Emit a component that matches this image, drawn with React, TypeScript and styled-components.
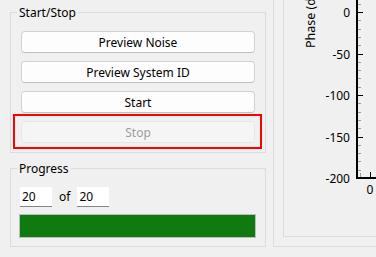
import React from "react";
import styled, { createGlobalStyle } from "styled-components";

const GlobalStyle = createGlobalStyle`
  html, body {
    margin: 0;
    padding: 0;
    background: #f0f0f0;
  }
  body {
    font-family: "Noto Sans", "Liberation Sans", sans-serif;
    font-size: 12px;
    color: #000;
  }
`;

const MAJOR = [
  { y: 12, label: "0" },
  { y: 53.5, label: "-50" },
  { y: 95, label: "-100" },
  { y: 136.5, label: "-150" },
  { y: 178, label: "-200" },
];

const MINOR: number[] = [];
for (let i = -3; i < 20; i++) {
  if (i % 5 === 0) continue;
  const y = 12 + i * 8.3;
  if (y > -19 && y < 178) MINOR.push(Math.round(y));
}

const App: React.FC = () => {
  return (
    <Window>
      <GlobalStyle />
      <Sidebar>
        <GroupBox>
          <GroupTitle>Start/Stop</GroupTitle>
          <StartStopBody>
            <ButtonStack>
              <PushButton>Preview Noise</PushButton>
              <PushButton>Preview System ID</PushButton>
              <PushButton>Start</PushButton>
            </ButtonStack>
            <Highlight>
              <PushButton disabled>Stop</PushButton>
            </Highlight>
          </StartStopBody>
        </GroupBox>
        <GroupBox>
          <GroupTitle>Progress</GroupTitle>
          <ProgressBody>
            <CountRow>
              <LineEdit defaultValue="20" />
              <OfLabel>of</OfLabel>
              <LineEdit defaultValue="20" />
            </CountRow>
            <ProgressBar>
              <ProgressFill style={{ width: `${(20 / 20) * 100}%` }} />
            </ProgressBar>
          </ProgressBody>
        </GroupBox>
      </Sidebar>
      <PlotFrame>
        <PlotCanvas>
          <PlotSvg viewBox="284 -19 138 255">
            <text
              x={315}
              y={48}
              fontSize={12.5}
              transform="rotate(-90 315 48)"
            >
              Phase (deg)
            </text>
            {MINOR.map((y) => (
              <rect key={y} x={358} y={y} width={3} height={1} fill="#9a9a9a" />
            ))}
            {MAJOR.map((t) => (
              <g key={t.label}>
                <rect x={358} y={Math.round(t.y)} width={5} height={1} fill="#000" />
                <text x={350} y={t.y + 5} fontSize={12} textAnchor="end">
                  {t.label}
                </text>
              </g>
            ))}
            <rect x={356} y={-19} width={2} height={198} fill="#000" />
            <rect x={356} y={177} width={70} height={2} fill="#000" />
            <rect x={360} y={173} width={1} height={4} fill="#9a9a9a" />
            <rect x={370} y={172} width={1} height={5} fill="#000" />
            <text x={370} y={194} fontSize={12} textAnchor="middle">
              0
            </text>
          </PlotSvg>
        </PlotCanvas>
      </PlotFrame>
    </Window>
  );
};

const Window = styled.div`
  width: 376px;
  height: 257px;
  overflow: hidden;
  display: flex;
  align-items: flex-start;
  gap: 7px;
  padding-left: 10px;
  box-sizing: border-box;
  background: #f0f0f0;
`;

const Sidebar = styled.div`
  flex: 0 0 256px;
  display: flex;
  flex-direction: column;
  gap: 8px;
  padding-top: 5px;
`;

const GroupBox = styled.fieldset`
  margin: 0;
  padding: 0;
  min-width: 0;
  border: 1px solid #dcdcdc;
`;

const GroupTitle = styled.legend`
  margin-left: 6px;
  padding: 0 2px;
  line-height: 15px;
  font-size: 12px;
`;

const StartStopBody = styled.div`
  display: flex;
  flex-direction: column;
  padding: 11px 10px 3px 10px;
`;

const ButtonStack = styled.div`
  display: flex;
  flex-direction: column;
  gap: 8px;
`;

const PushButton = styled.button`
  height: 22px;
  margin: 0;
  padding: 0;
  border: 1px solid #d2d2d2;
  border-bottom-color: #c0c0c0;
  border-radius: 4px;
  background: #fdfdfd;
  font-family: inherit;
  font-size: 12px;
  color: #000;
  box-sizing: border-box;

  &:disabled {
    background: #f5f5f5;
    border-color: #e6e6e6;
    color: #9d9d9d;
  }
`;

const Highlight = styled.div`
  display: flex;
  flex-direction: column;
  margin: 1px -7px 0 -8px;
  padding: 5px 5px 4px 6px;
  border: 2px solid #ff0000;
`;

const ProgressBody = styled.div`
  display: flex;
  flex-direction: column;
  gap: 7px;
  padding: 11px 9px 8px 8px;
`;

const CountRow = styled.div`
  display: flex;
  align-items: center;
  height: 20px;
  padding-left: 1px;
`;

const LineEdit = styled.input`
  width: 32px;
  height: 20px;
  margin: 0;
  padding: 0 0 0 2px;
  border: none;
  border-bottom: 1px solid #858585;
  background: #fff;
  font-family: inherit;
  font-size: 12px;
  color: #000;
  box-sizing: border-box;
  outline: none;
`;

const OfLabel = styled.span`
  margin: 0 7px;
  line-height: 20px;
`;

const ProgressBar = styled.div`
  height: 24px;
  border: 1px solid #bcbcbc;
  box-sizing: border-box;
  background: #e6e6e6;
`;

const ProgressFill = styled.div`
  height: 100%;
  background: #107a10;
`;

const PlotFrame = styled.div`
  flex: 0 0 160px;
  margin-top: -30px;
  height: 277px;
  padding: 9px;
  border: 1px solid #dcdcdc;
  box-sizing: border-box;
  display: flex;
`;

const PlotCanvas = styled.div`
  flex: 1;
  border: 1px solid #dcdcdc;
  display: flex;
`;

const PlotSvg = styled.svg`
  width: 138px;
  height: 255px;
  display: block;
  font-family: "Noto Sans", "Liberation Sans", sans-serif;
`;

export default App;
